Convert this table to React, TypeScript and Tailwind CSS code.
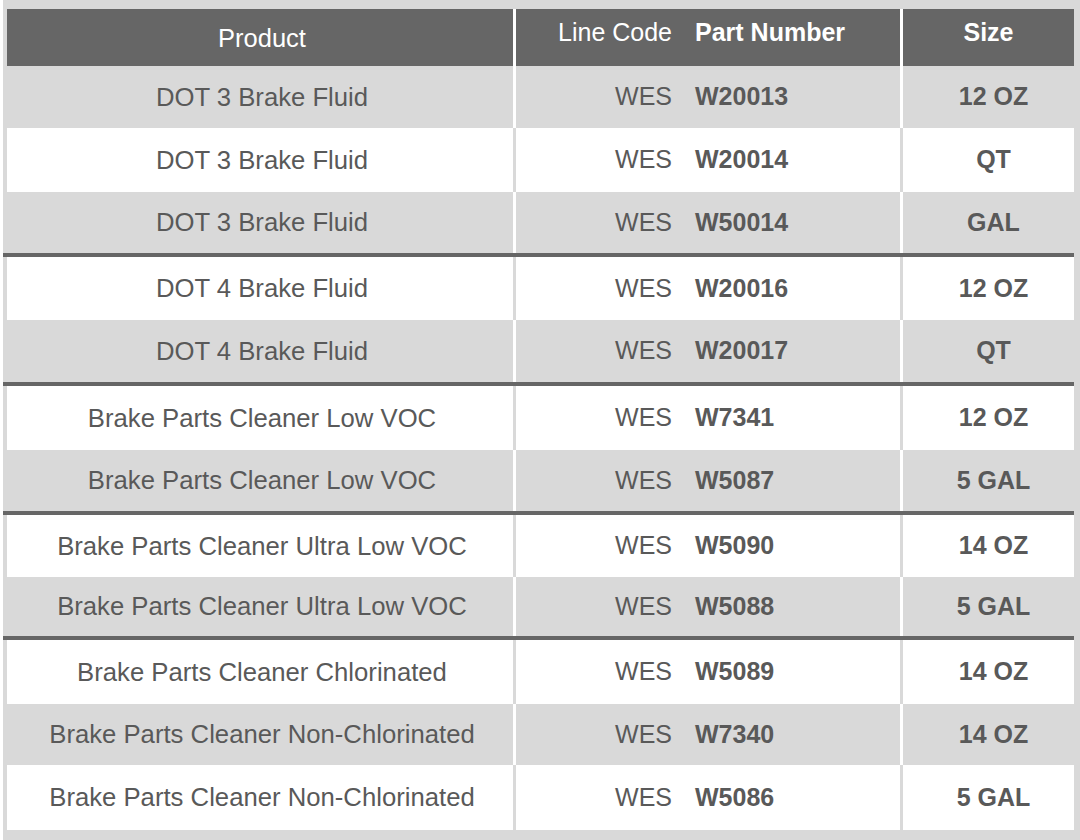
type Row = { product: string; part: string; size: string; h: string };

const groups: Row[][] = [
  [
    { product: 'DOT 3 Brake Fluid', part: 'W20013', size: '12 OZ', h: 'h-[62px]' },
    { product: 'DOT 3 Brake Fluid', part: 'W20014', size: 'QT', h: 'h-[64px]' },
    { product: 'DOT 3 Brake Fluid', part: 'W50014', size: 'GAL', h: 'h-[61px]' },
  ],
  [
    { product: 'DOT 4 Brake Fluid', part: 'W20016', size: '12 OZ', h: 'h-[63px]' },
    { product: 'DOT 4 Brake Fluid', part: 'W20017', size: 'QT', h: 'h-[62px]' },
  ],
  [
    { product: 'Brake Parts Cleaner Low VOC', part: 'W7341', size: '12 OZ', h: 'h-[64px]' },
    { product: 'Brake Parts Cleaner Low VOC', part: 'W5087', size: '5 GAL', h: 'h-[61px]' },
  ],
  [
    { product: 'Brake Parts Cleaner Ultra Low VOC', part: 'W5090', size: '14 OZ', h: 'h-[62px]' },
    { product: 'Brake Parts Cleaner Ultra Low VOC', part: 'W5088', size: '5 GAL', h: 'h-[59px]' },
  ],
  [
    { product: 'Brake Parts Cleaner Chlorinated', part: 'W5089', size: '14 OZ', h: 'h-[64px]' },
    { product: 'Brake Parts Cleaner Non-Chlorinated', part: 'W7340', size: '14 OZ', h: 'h-[61px]' },
    { product: 'Brake Parts Cleaner Non-Chlorinated', part: 'W5086', size: '5 GAL', h: 'h-[65px]' },
  ],
];

const font = { fontFamily: '"Liberation Sans", Arial, sans-serif' };

const App = () => {
  let idx = 0;

  return (
    <div className="min-h-[840px] bg-white pl-[3px]" style={font}>
      <div className="w-[1077px] bg-[#d9d9d9] pt-[9px] pb-[10px] pl-[4px] pr-[6px]">
        {/* header */}
        <div className="flex h-[57px] bg-[#666666] text-white">
          <div className="flex w-[506px] items-center justify-center pt-[1px] pl-[4px] text-[25.5px]">Product</div>
          <div className="w-[3px] bg-white" />
          <div className="flex w-[384px] items-start pt-[9px] text-[25px] leading-[29px]">
            <div className="w-[168px] pr-[12px] text-right">Line Code</div>
            <div className="pl-[11px] font-bold">Part Number</div>
          </div>
          <div className="w-[3px] bg-white" />
          <div className="flex flex-1 justify-center pt-[9px] text-[25px] font-bold leading-[29px]">Size</div>
        </div>

        {groups.map((group, g) => (
          <div key={g}>
            {g > 0 && <div className="-ml-[4px] h-[4px] bg-[#666666]" />}
            {group.map((row, i) => {
              const gray = idx++ % 2 === 0;
              return (
                <div
                  key={i}
                  className={`flex ${row.h} text-[#595959] ${gray ? 'bg-[#d9d9d9]' : 'bg-white'}`}
                >
                  <div className="flex w-[506px] items-center justify-center pl-[4px] text-[25.7px]">{row.product}</div>
                  <div className={`w-[3px] ${gray ? 'bg-white' : 'bg-[#d9d9d9]'}`} />
                  <div className="flex w-[384px] items-center text-[25px]">
                    <div className="w-[168px] pr-[12px] text-right">WES</div>
                    <div className="pl-[11px] font-bold">{row.part}</div>
                  </div>
                  <div className={`w-[3px] ${gray ? 'bg-white' : 'bg-[#d9d9d9]'}`} />
                  <div className="flex flex-1 items-center justify-center pl-[10px] text-[25px] font-bold">
                    {row.size}
                  </div>
                </div>
              );
            })}
          </div>
        ))}
      </div>
    </div>
  );
};

export default App;
